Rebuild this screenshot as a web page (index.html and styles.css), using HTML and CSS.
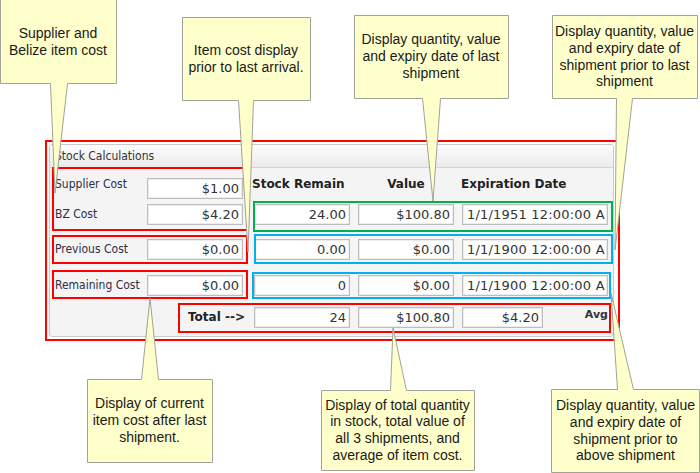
FILE: index.html
```html
<!DOCTYPE html>
<html lang="en">
<head>
<meta charset="utf-8">
<title>Stock Calculations</title>
<link rel="stylesheet" href="styles.css">
</head>
<body>
<div class="canvas">
  <div class="stock-frame">
    <section class="panel">
      <header class="panel-title">Stock Calculations</header>
      <div class="panel-body">
        <span class="label label-top c1 r1">Supplier Cost</span>
        <input class="field c2 r1" readonly value="$1.00">
        <span class="head c4 r1 head-qty">Stock Remain</span>
        <span class="head c6 r1 head-value">Value</span>
        <span class="head c8 r1 head-date">Expiration Date</span>

        <span class="label c1 r2">BZ Cost</span>
        <input class="field c2 r2" readonly value="$4.20">
        <input class="field c4 r2" readonly value="24.00">
        <input class="field c6 r2" readonly value="$100.80">
        <input class="field date c8 r2" readonly value="1/1/1951 12:00:00 AM">

        <span class="label c1 r3">Previous Cost</span>
        <input class="field c2 r3" readonly value="$0.00">
        <input class="field c4 r3" readonly value="0.00">
        <input class="field c6 r3" readonly value="$0.00">
        <input class="field date c8 r3" readonly value="1/1/1900 12:00:00 AM">

        <span class="label c1 r4">Remaining Cost</span>
        <input class="field c2 r4" readonly value="$0.00">
        <input class="field c4 r4" readonly value="0">
        <input class="field c6 r4" readonly value="$0.00">
        <input class="field date c8 r4" readonly value="1/1/1900 12:00:00 AM">

        <span class="total-label c2 r5">Total --&gt;</span>
        <input class="field c4 r5" readonly value="24">
        <input class="field c6 r5" readonly value="$100.80">
        <input class="field field-avg c8 r5" readonly value="$4.20">
        <span class="avg-label c8 r5">Avg</span>

        <div class="mark mark-red mark-a"></div>
        <div class="mark mark-green mark-b"></div>
        <div class="mark mark-red mark-c"></div>
        <div class="mark mark-blue mark-d"></div>
        <div class="mark mark-red mark-e"></div>
        <div class="mark mark-blue mark-f"></div>
        <div class="mark mark-red mark-g"></div>
      </div>
    </section>
  </div>

  <svg class="shapes" width="700" height="473" viewBox="0 0 700 473" aria-hidden="true">
    <g fill="#ffffcc" stroke="#a2a296" stroke-width="1" stroke-linejoin="miter">
      <path d="M0.5,-1 H116.5 V83.5 H67.5 L55,193 L50.5,83.5 H0.5 Z"/>
      <path d="M182.5,17.5 H310.5 V100.5 H253.5 L248,252 L238.5,100.5 H182.5 Z"/>
      <path d="M354.5,15.5 H508.5 V98.5 H440.5 L433,201 L422.5,98.5 H354.5 Z"/>
      <path d="M552.5,15.5 H697.5 V98.5 H632.5 L615,250 L616.5,98.5 H552.5 Z"/>
      <path d="M87.5,379.5 H141.5 L150,298 L158.5,379.5 H212.5 V462.5 H87.5 Z"/>
      <path d="M321.5,390.5 H390.5 L393,328 L406.5,390.5 H474.5 V470.5 H321.5 Z"/>
      <path d="M551.5,389.5 H617.5 L611,293 L633.5,389.5 H699.5 V472.5 H551.5 Z"/>
    </g>
  </svg>

  <div class="note note-1">Supplier and<br>Belize item cost</div>
  <div class="note note-2">Item cost display<br>prior to last arrival.</div>
  <div class="note note-3">Display quantity, value<br>and expiry date of last<br>shipment</div>
  <div class="note note-4">Display quantity, value<br>and expiry date of<br>shipment prior to last<br>shipment</div>
  <div class="note note-5">Display of current<br>item cost after last<br>shipment.</div>
  <div class="note note-6">Display of total quantity<br>in stock, total value of<br>all 3 shipments, and<br>average of item cost.</div>
  <div class="note note-7">Display quantity, value<br>and expiry date of<br>shipment prior to<br>above shipment</div>
</div>
</body>
</html>
```
FILE: styles.css
```css
* { box-sizing: border-box; }

html, body {
  margin: 0;
  padding: 0;
  background: #ffffff;
}

body {
  width: 700px;
  height: 473px;
  overflow: hidden;
}

.canvas {
  position: relative;
  width: 700px;
  height: 473px;
  padding: 140px 0 0 45px;
  overflow: hidden;
}

/* outer red highlight round the whole panel */
.stock-frame {
  width: 575px;
  height: 201px;
  border: 2px solid #ff0000;
  padding: 2px 0 0 2px;
}

.panel {
  width: 565px;
  height: 193px;
  border: 1px solid #cbcbcb;
  border-radius: 3px;
  background: #f4f4f4;
  display: flex;
  flex-direction: column;
  overflow: hidden;
}

.panel-title {
  height: 23px;
  padding-left: 5px;
  border-bottom: 1px solid #d4d4d4;
  background: linear-gradient(#fcfcfc, #ebebeb);
  font: 12px "DejaVu Sans Condensed", "DejaVu Sans", sans-serif;
  font-stretch: condensed;
  line-height: 22px;
  color: #333333;
}

.panel-body {
  flex: 1;
  display: grid;
  grid-template-columns: 92px 96px 11px 96px 8px 96px 8px 146px;
  grid-template-rows: 26px 35px 36px 32px 1fr;
  align-items: start;
  padding: 10px 0 0 5px;
}

.c1 { grid-column: 1; }
.c2 { grid-column: 2; }
.c4 { grid-column: 4; }
.c6 { grid-column: 6; }
.c8 { grid-column: 8; }
.r1 { grid-row: 1; }
.r2 { grid-row: 2; }
.r3 { grid-row: 3; }
.r4 { grid-row: 4; }
.r5 { grid-row: 5; }

.label {
  font: 12px "DejaVu Sans Condensed", "DejaVu Sans", sans-serif;
  font-stretch: condensed;
  line-height: 21px;
  color: #2e2e46;
  white-space: nowrap;
}

.label-top {
  line-height: 12px;
}

.head {
  font: bold 12px "DejaVu Sans", sans-serif;
  line-height: 12px;
  color: #222222;
  white-space: nowrap;
}

.head-qty { margin-left: -2px; }
.head-value { justify-self: center; }
.head-date { margin-left: -1px; }

.field {
  display: block;
  width: 100%;
  height: 21px;
  margin: 0;
  padding: 0 3px 0 4px;
  border: 1px solid #bdbdbd;
  box-shadow: inset 0 0 0 1px #ececec;
  border-radius: 0;
  background: #ffffff;
  font: 13px "DejaVu Sans", sans-serif;
  color: #333333;
  text-align: right;
  outline: none;
}

.field.date {
  text-align: left;
  padding: 0 2px 0 4px;
  letter-spacing: 0.2px;
}

.field-avg {
  width: 81px;
}

.total-label {
  justify-self: end;
  margin-right: -2px;
  font: bold 12px "DejaVu Sans", sans-serif;
  line-height: 21px;
  color: #222222;
  white-space: nowrap;
}

.avg-label {
  justify-self: end;
  font: bold 11px "DejaVu Sans", sans-serif;
  line-height: 16px;
  color: #333333;
}

/* annotation highlight boxes, layered over grid cells */
.mark {
  align-self: stretch;
  justify-self: stretch;
  border: 2px solid;
  pointer-events: none;
  z-index: 2;
}
.mark-red { border-color: #ff0000; }
.mark-green { border-color: #00b050; }
.mark-blue { border-color: #00b0f0; }

.mark-a { grid-column: 1 / 3; grid-row: 1 / 3; margin: -11px -5px 8px -3px; }
.mark-b { grid-column: 4 / 9; grid-row: 2; margin: -3px -5px 7px -1px; }
.mark-c { grid-column: 1 / 3; grid-row: 3; margin: -4px -5px 11px -3px; }
.mark-d { grid-column: 4 / 9; grid-row: 3; margin: -5px -5px 11px 0; }
.mark-e { grid-column: 1 / 3; grid-row: 4; margin: -5px -5px 8px -3px; }
.mark-f { grid-column: 4 / 9; grid-row: 4; margin: -3px -3px 8px -2px; }
.mark-g { grid-column: 2 / 9; grid-row: 5; margin: -4px -3px 3px 31px; }

/* callout shapes and their captions */
.shapes {
  position: absolute;
  top: 0;
  left: 0;
  pointer-events: none;
  z-index: 5;
}

.note {
  position: absolute;
  z-index: 6;
  display: flex;
  align-items: center;
  justify-content: center;
  text-align: center;
  font: 14px "Liberation Sans", Arial, sans-serif;
  line-height: 16.7px;
  color: #1a1a1a;
  white-space: nowrap;
}

.note-1 { left: 0; top: 0; width: 116px; height: 84px; }
.note-2 { left: 182px; top: 17px; width: 128px; height: 83px; }
.note-3 { left: 354px; top: 15px; width: 154px; height: 83px; }
.note-4 { left: 552px; top: 15px; width: 145px; height: 83px; }
.note-5 { left: 87px; top: 379px; width: 125px; height: 83px; }
.note-6 { left: 321px; top: 390px; width: 153px; height: 80px; }
.note-7 { left: 551px; top: 389px; width: 149px; height: 83px; }
```
